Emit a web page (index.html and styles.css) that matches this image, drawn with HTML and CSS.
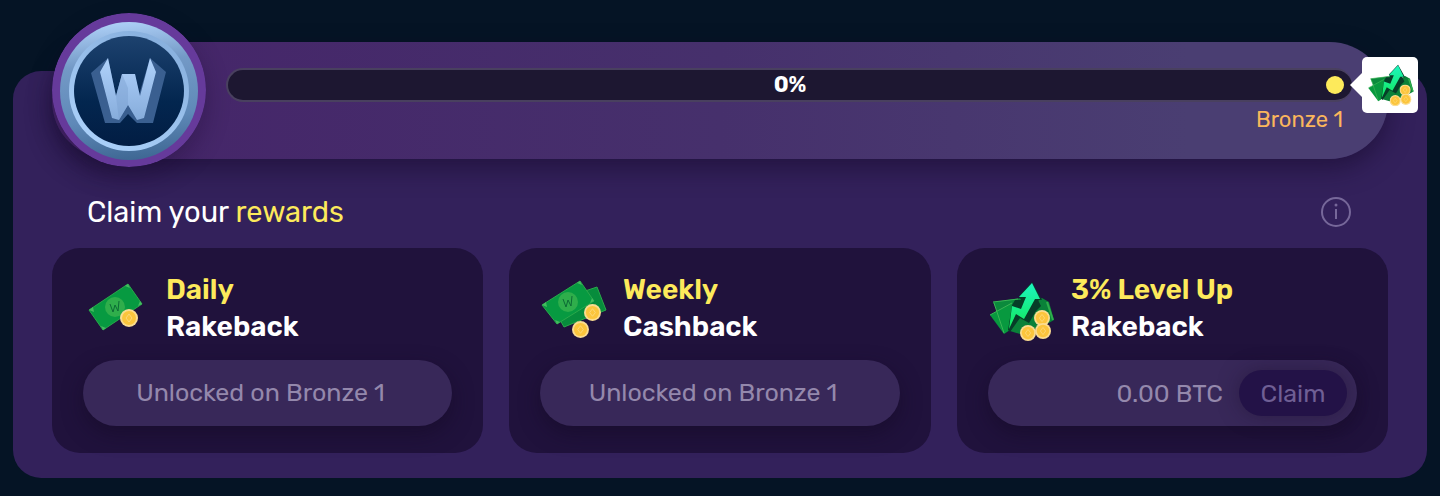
FILE: index.html
```html
<!DOCTYPE html>
<html lang="en">
<head>
  <meta charset="UTF-8">
  <meta name="viewport" content="width=device-width, initial-scale=1.0">
  <title>Rewards</title>
  <link rel="stylesheet" href="styles.css">
</head>
<body>
  <svg class="defs" aria-hidden="true">
    <defs>
      <linearGradient id="arrowFill" x1="0" y1="1" x2="0" y2="0">
        <stop offset="0" stop-color="#12e858"/>
        <stop offset="1" stop-color="#1df5c0"/>
      </linearGradient>
      <symbol id="coin" viewBox="0 0 18 18">
        <circle cx="9" cy="9" r="9" fill="#fbdc90"/>
        <circle cx="9" cy="9" r="7" fill="#fcc53c"/>
        <path d="M9 5 L12 9 L9 13 L6 9 Z" fill="none" stroke="#fdd877" stroke-width="1"/>
      </symbol>
      <!-- level up: notes, lightning arrow, three coins -->
      <symbol id="levelUp" viewBox="0 0 68 68">
        <path d="M5 28 L34 24 L30 46 L18 58 Z" fill="#0b8a3c"/>
        <path d="M2 41 L24 29 L34 48 L16 60 Z" fill="#08993f"/>
        <path d="M5 28 L30 25 M2 41 L24 29 M6 29 L16 59" fill="none" stroke="#3bb455" stroke-width="1"/>
        <path d="M22 57 L36 36 L54 24 L61 28 L66 46 L52 54 L32 60 Z" fill="#0a8139"/>
        <path d="M59 28 L65 46" stroke="#2fae4b" stroke-width="2"/>
        <path d="M20 56 L23 38 L24 31 L27 26 L33 26 L31 22 L44 8 L54 26 L50 26 L53 32 L48 37 L41 49 L32 44 L22 58 Z" fill="#063d28"/>
        <path d="M21 55 L24 32 L33 35 L38 23 L31 23 L44 9 L52 25 L47 25 L36 45 L28 40 Z" fill="url(#arrowFill)"/>
        <use href="#coin" x="46" y="36" width="16" height="16"/>
        <use href="#coin" x="47" y="49" width="16" height="16"/>
        <use href="#coin" x="32" y="51" width="16" height="16"/>
      </symbol>
    </defs>
  </svg>

  <main class="panel">
    <section class="level">
      <svg class="medal" viewBox="0 0 154 154" role="img" aria-label="Level medal">
        <defs>
          <linearGradient id="rim" x1="0.4" y1="0" x2="0.5" y2="1">
            <stop offset="0" stop-color="#aed0f7"/>
            <stop offset="0.3" stop-color="#7399c6"/>
            <stop offset="0.7" stop-color="#5f89b8"/>
            <stop offset="1" stop-color="#3f6894"/>
          </linearGradient>
          <linearGradient id="rimInner" x1="0.8" y1="0" x2="0.2" y2="1">
            <stop offset="0" stop-color="#86aedc"/>
            <stop offset="1" stop-color="#acd2fb"/>
          </linearGradient>
          <linearGradient id="face" x1="0" y1="0" x2="0" y2="1">
            <stop offset="0" stop-color="#1d426f"/>
            <stop offset="0.6" stop-color="#03264f"/>
            <stop offset="1" stop-color="#021d43"/>
          </linearGradient>
          <linearGradient id="mark" x1="0" y1="0" x2="0" y2="1">
            <stop offset="0" stop-color="#b0d2fb"/>
            <stop offset="1" stop-color="#86acdb"/>
          </linearGradient>
        </defs>
        <circle cx="77" cy="77" r="77" fill="#663a9b"/>
        <circle cx="77" cy="78" r="69" fill="url(#rim)"/>
        <circle cx="77" cy="78" r="60" fill="url(#rimInner)"/>
        <circle cx="77" cy="78" r="55" fill="url(#face)"/>
        <path d="M56 45 L39 60 L53 110 L68 110 L76 101 L85 110 L101 110 L114 59 L98 45 L87 82 L83 61 L70 61 L64 83 Z" fill="#3a5f90"/>
        <path d="M56 45 L64 83 L70 61 L83 61 L88 83 L98 45 L104 59 L92 105 L85 107 L76 92 L67 107 L60 105 L48 59 Z" fill="url(#mark)"/>
        <path d="M70 61 L76 75 L76 92 L67 107 L64 83 Z" fill="#7398c9" opacity="0.35"/>
      </svg>
      <div class="level-body">
        <div class="track" role="progressbar" aria-label="Level progress" aria-valuenow="0" aria-valuemin="0" aria-valuemax="100">
          <span class="percent">0%</span>
          <span class="dot"></span>
          <div class="prize">
            <svg class="prize-icon" aria-hidden="true"><use href="#levelUp"/></svg>
          </div>
        </div>
        <div class="next-level">Bronze 1</div>
      </div>
    </section>

    <header class="heading">
      <h1>Claim your <span>rewards</span></h1>
      <button class="info" type="button" aria-label="Info">
        <svg viewBox="0 0 30 30" aria-hidden="true">
          <circle cx="15" cy="15" r="14" fill="none" stroke="currentColor" stroke-width="2"/>
          <path d="M15 12 V22" stroke="currentColor" stroke-width="2"/>
          <circle cx="15" cy="8" r="1.500" fill="currentColor"/>
        </svg>
      </button>
    </header>

    <section class="cards">
      <article class="card">
        <div class="card-head">
          <svg class="card-icon" viewBox="0 0 68 68" aria-hidden="true">
            <path d="M6 36 L45 10 L59 30 L20 56 Z" fill="#079a41" stroke="#2aa84a" stroke-width="1"/>
            <path d="M6 36 L10 33 L11 38 Z M45 10 L42 12 L47 14 Z M59 30 L55 32 L57 27 Z M20 56 L23 54 L18 52 Z" fill="#45bb60"/>
            <circle cx="32" cy="33" r="10" fill="#2fae4b"/>
            <path d="M27 30 L30 38 L32 31 L35 37 L36 27" fill="none" stroke="#0b6b35" stroke-width="1"/>
            <use href="#coin" x="37" y="35" width="18" height="18"/>
          </svg>
          <h2><span>Daily</span><br>Rakeback</h2>
        </div>
        <button class="claim-bar" type="button" disabled>Unlocked on Bronze 1</button>
      </article>

      <article class="card">
        <div class="card-head">
          <svg class="card-icon" viewBox="0 0 68 68" aria-hidden="true">
            <path d="M20 46 L24 53 L66 36 L57 13 L42 18 Z" fill="#078c3c" stroke="#2aa84a" stroke-width="1"/>
            <path d="M2 31 L40 7 L54 27 L17 50 Z" fill="#079a41" stroke="#2aa84a" stroke-width="1"/>
            <path d="M2 31 L6 28 L7 33 Z M40 7 L37 9 L42 11 Z M54 27 L50 29 L52 24 Z M17 50 L20 48 L15 46 Z" fill="#45bb60"/>
            <circle cx="28" cy="28" r="10" fill="#2fae4b"/>
            <path d="M23 25 L26 33 L28 26 L31 32 L32 22" fill="none" stroke="#0b6b35" stroke-width="1"/>
            <use href="#coin" x="44" y="30" width="17" height="17"/>
            <use href="#coin" x="32" y="47" width="17" height="17"/>
          </svg>
          <h2><span>Weekly</span><br>Cashback</h2>
        </div>
        <button class="claim-bar" type="button" disabled>Unlocked on Bronze 1</button>
      </article>

      <article class="card">
        <div class="card-head">
          <svg class="card-icon" aria-hidden="true"><use href="#levelUp"/></svg>
          <h2><span>3% Level Up</span><br>Rakeback</h2>
        </div>
        <div class="claim-bar claim-amount">
          <span>0.00 BTC</span>
          <button class="claim" type="button" disabled>Claim</button>
        </div>
      </article>
    </section>
  </main>
</body>
</html>
```
FILE: styles.css
```css
* { margin: 0; padding: 0; box-sizing: border-box; }

body {
  background: #051425;
  color: #fff;
  font-family: Rubik, Roboto, sans-serif;
}

button { border: none; background: none; font: inherit; color: inherit; }

.defs { position: absolute; width: 0; height: 0; }

.panel {
  margin: 71px 13px 18px;
  padding: 0 39px 25px;
  border-radius: 28px;
  background: #33215b;
  display: flow-root;
}

/* level banner */
.level {
  display: flex;
  height: 117px;
  margin-top: -29px;
  padding-right: 36px;
  border-radius: 59px;
  background: linear-gradient(90deg, #452469, #46306c 50%, #4a3e72 85%);
  box-shadow: 0 10px 24px rgba(20, 8, 40, 0.5);
}

.medal {
  flex: none;
  width: 154px;
  height: 154px;
  margin-top: -29px;
  border-radius: 50%;
  box-shadow: 0 10px 24px rgba(20, 8, 40, 0.3);
}

.level-body { flex: 1; padding: 26px 0 0 20px; }

.track {
  position: relative;
  display: flex;
  align-items: center;
  justify-content: center;
  height: 34px;
  border: 2px solid #49405f;
  border-right: none;
  border-radius: 17px;
  background: #1d1731;
}

.percent { font-size: 22px; font-weight: 700; line-height: 30px; }

.dot {
  position: absolute;
  right: 8px;
  width: 18px;
  height: 18px;
  border-radius: 50%;
  background: #fdea5b;
}

.prize {
  position: absolute;
  right: -66px;
  width: 56px;
  height: 56px;
  padding: 2px 5px;
  border-radius: 5px;
  background: #fff;
}

.prize::before {
  content: "";
  position: absolute;
  left: -12px;
  top: 16px;
  border: 12px solid transparent;
  border-left: none;
  border-right-color: #fff;
}

.prize-icon { display: block; width: 48px; height: 48px; }

.next-level {
  padding: 4px 9px 0 0;
  color: #fab65c;
  font-size: 22px;
  line-height: 28px;
  text-align: right;
}

/* heading */
.heading {
  display: flex;
  align-items: center;
  justify-content: space-between;
  padding: 35px 37px 18px 35px;
}

.heading h1 { font-size: 29px; font-weight: 400; line-height: 36px; }
.heading span, .card h2 span { color: #fdea5b; }

.info { width: 30px; height: 30px; color: #77689a; }
.info svg { display: block; }

/* reward cards */
.cards {
  display: grid;
  grid-template-columns: 431fr 422fr 431fr;
  gap: 26px;
}

.card {
  padding: 23px 31px 27px;
  border-radius: 28px;
  background: #20123c;
}

.card-head { display: flex; gap: 15px; margin-bottom: 15px; }
.card-icon { flex: none; width: 68px; height: 68px; margin-top: 3px; }
.card h2 { font-size: 28px; font-weight: 600; line-height: 37px; }

.claim-bar {
  display: block;
  width: 100%;
  height: 66px;
  padding: 0 14px 2px 0;
  border-radius: 33px;
  background: #382859;
  box-shadow: 0 8px 20px rgba(20, 10, 35, 0.5);
  color: #9488ac;
  font-size: 25px;
}

.claim-amount {
  display: flex;
  align-items: center;
  justify-content: flex-end;
  gap: 16px;
  padding: 0 10px 0 0;
}

.claim {
  width: 108px;
  height: 46px;
  border-radius: 23px;
  background: #231247;
  box-shadow: 0 0 20px rgba(32, 18, 50, 0.5);
  color: #6f5f94;
}
```
